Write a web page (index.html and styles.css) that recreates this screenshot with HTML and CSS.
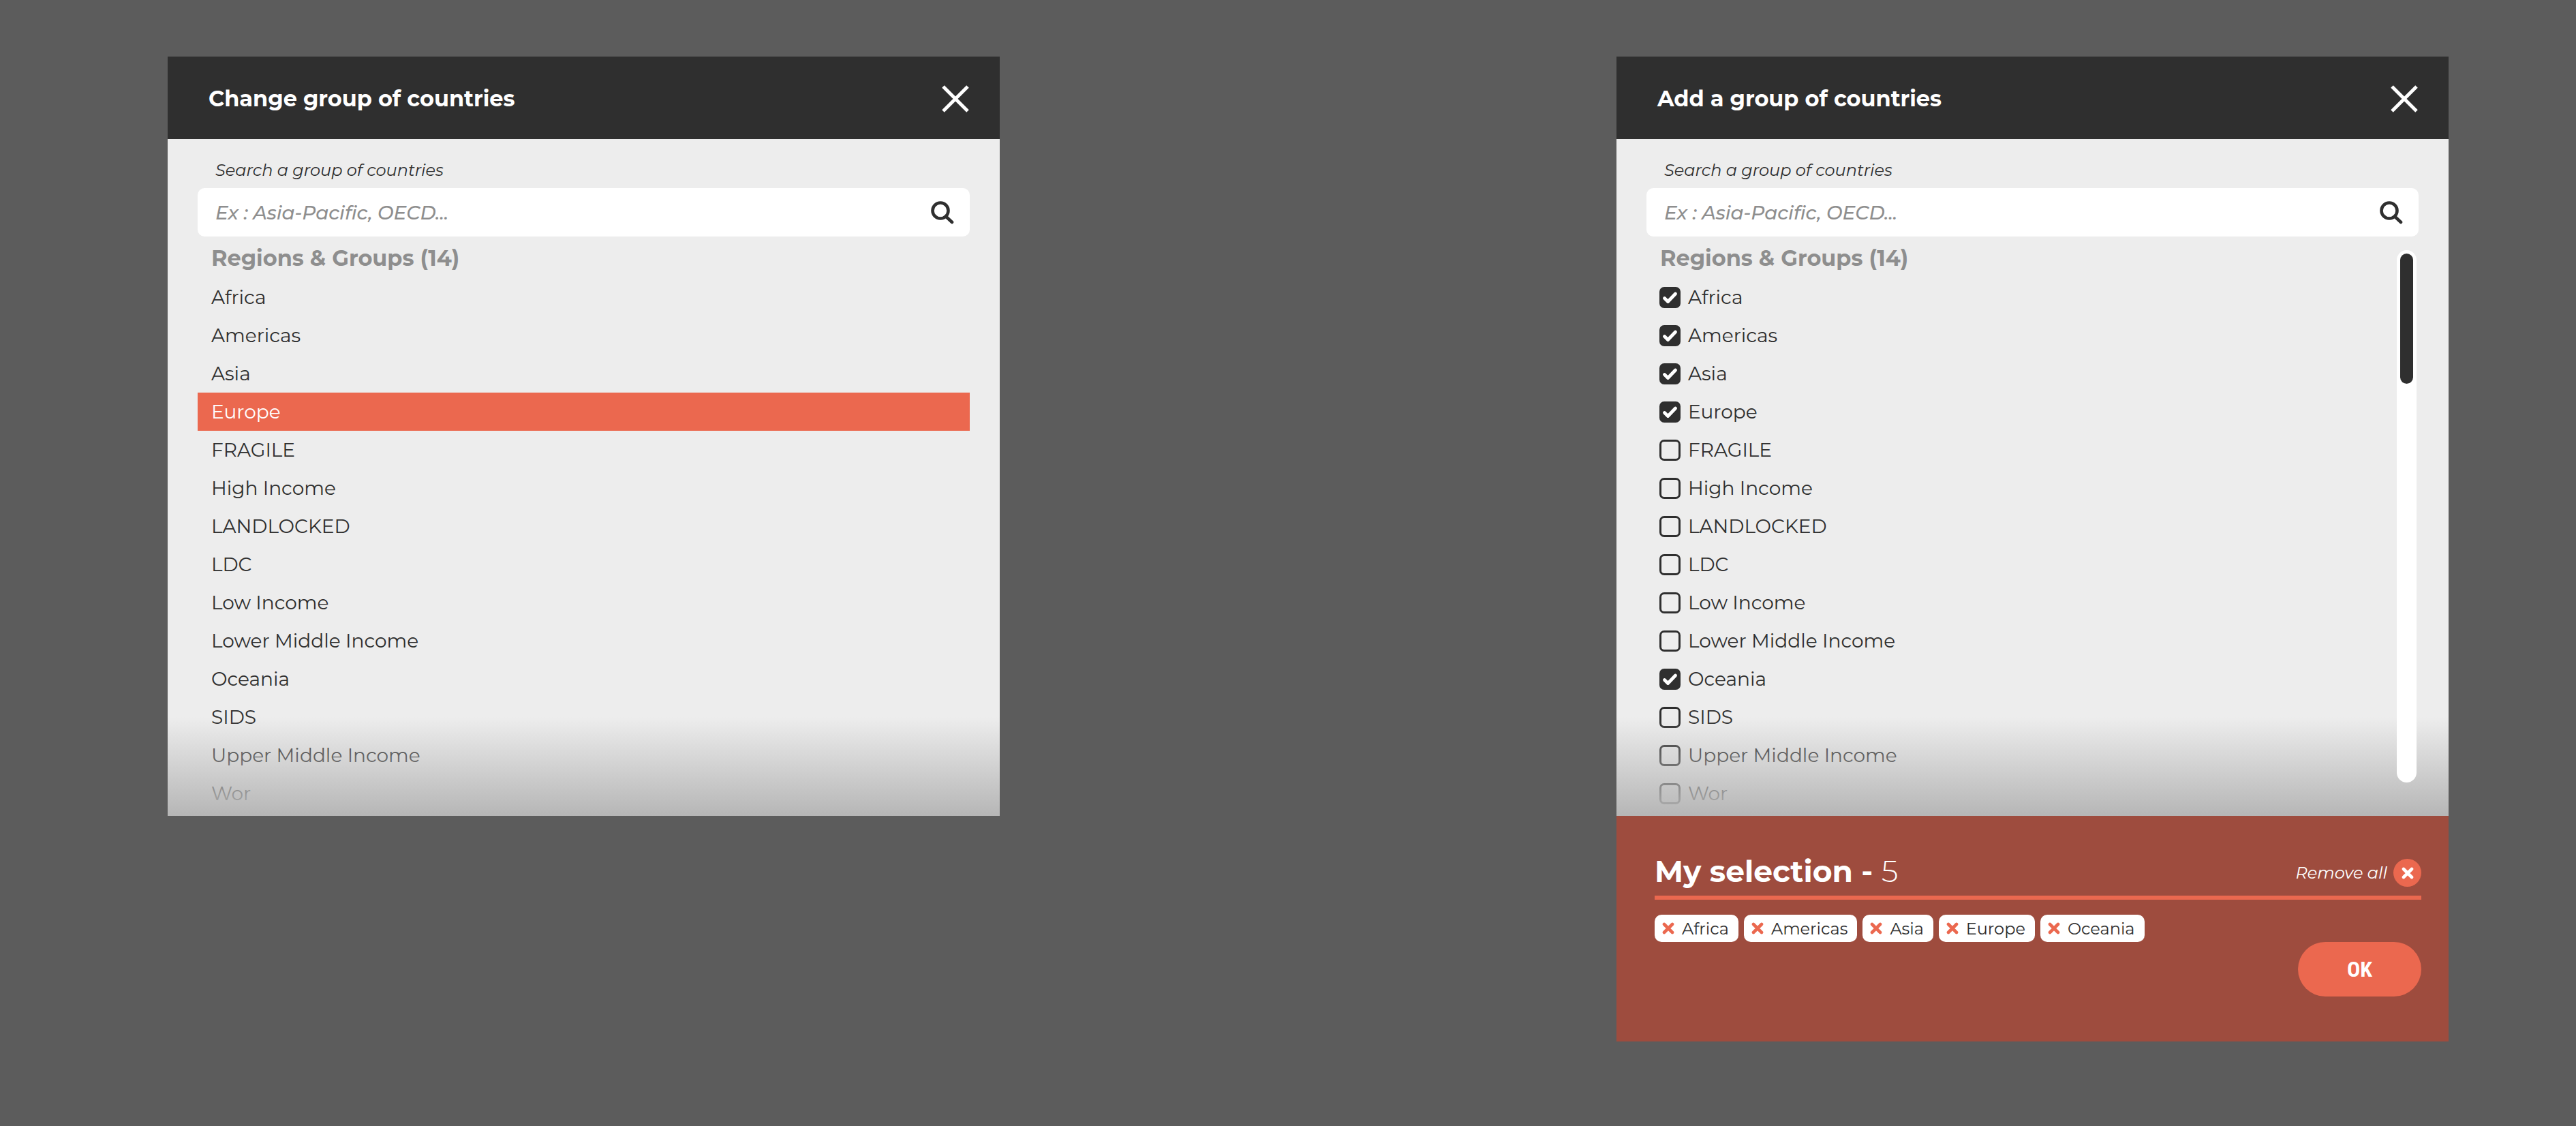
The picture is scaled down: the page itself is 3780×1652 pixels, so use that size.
FILE: index.html
```html
<!DOCTYPE html>
<html lang="en">
<head>
<meta charset="utf-8">
<title>Groups of countries</title>
<link rel="stylesheet" href="styles.css">
</head>
<body>
<svg class="sprite" aria-hidden="true">
  <symbol id="close" viewBox="0 0 40 40"><path d="M2 2 38 38M38 2 2 38" fill="none" stroke="currentColor" stroke-width="5"/></symbol>
  <symbol id="search" viewBox="0 0 34 34"><circle cx="14" cy="14" r="11.5" fill="none" stroke="currentColor" stroke-width="4.6"/><path d="M23 23.500 31 31" fill="none" stroke="currentColor" stroke-width="4.600" stroke-linecap="round"/></symbol>
  <symbol id="cross" viewBox="0 0 18 18"><path d="M3 3 15 15M15 3 3 15" fill="none" stroke="currentColor" stroke-width="4.600" stroke-linecap="round"/></symbol>
</svg>
<main class="page">
  <section class="panel" aria-labelledby="change-title">
    <header class="panel-header">
      <h1 class="panel-title" id="change-title">Change group of countries</h1>
      <button class="icon-button" type="button" aria-label="Close"><svg class="icon-close"><use href="#close"/></svg></button>
    </header>
    <div class="panel-body">
      <label class="search-label" for="search-change">Search a group of countries</label>
      <div class="search">
        <input class="search-input" id="search-change" type="text" placeholder="Ex : Asia-Pacific, OECD...">
        <button class="icon-button" type="button" aria-label="Search"><svg class="icon-search"><use href="#search"/></svg></button>
      </div>
      <div class="groups">
        <div class="groups-main">
          <h2 class="groups-title">Regions &amp; Groups (14)</h2>
          <ul class="list">
            <li><button class="row" type="button">Africa</button></li>
            <li><button class="row" type="button">Americas</button></li>
            <li><button class="row" type="button">Asia</button></li>
            <li><button class="row row-selected" type="button">Europe</button></li>
            <li><button class="row" type="button">FRAGILE</button></li>
            <li><button class="row" type="button">High Income</button></li>
            <li><button class="row" type="button">LANDLOCKED</button></li>
            <li><button class="row" type="button">LDC</button></li>
            <li><button class="row" type="button">Low Income</button></li>
            <li><button class="row" type="button">Lower Middle Income</button></li>
            <li><button class="row" type="button">Oceania</button></li>
            <li><button class="row" type="button">SIDS</button></li>
            <li><button class="row" type="button">Upper Middle Income</button></li>
            <li><button class="row" type="button">Wor</button></li>
          </ul>
        </div>
      </div>
    </div>
  </section>

  <section class="panel" aria-labelledby="add-title">
    <header class="panel-header">
      <h1 class="panel-title" id="add-title">Add a group of countries</h1>
      <button class="icon-button" type="button" aria-label="Close"><svg class="icon-close"><use href="#close"/></svg></button>
    </header>
    <div class="panel-body">
      <label class="search-label" for="search-add">Search a group of countries</label>
      <div class="search">
        <input class="search-input" id="search-add" type="text" placeholder="Ex : Asia-Pacific, OECD...">
        <button class="icon-button" type="button" aria-label="Search"><svg class="icon-search"><use href="#search"/></svg></button>
      </div>
      <div class="groups">
        <div class="groups-main">
          <h2 class="groups-title">Regions &amp; Groups (14)</h2>
          <ul class="list">
            <li><label class="row row-check"><input class="check" type="checkbox" checked>Africa</label></li>
            <li><label class="row row-check"><input class="check" type="checkbox" checked>Americas</label></li>
            <li><label class="row row-check"><input class="check" type="checkbox" checked>Asia</label></li>
            <li><label class="row row-check"><input class="check" type="checkbox" checked>Europe</label></li>
            <li><label class="row row-check"><input class="check" type="checkbox">FRAGILE</label></li>
            <li><label class="row row-check"><input class="check" type="checkbox">High Income</label></li>
            <li><label class="row row-check"><input class="check" type="checkbox">LANDLOCKED</label></li>
            <li><label class="row row-check"><input class="check" type="checkbox">LDC</label></li>
            <li><label class="row row-check"><input class="check" type="checkbox">Low Income</label></li>
            <li><label class="row row-check"><input class="check" type="checkbox">Lower Middle Income</label></li>
            <li><label class="row row-check"><input class="check" type="checkbox" checked>Oceania</label></li>
            <li><label class="row row-check"><input class="check" type="checkbox">SIDS</label></li>
            <li><label class="row row-check"><input class="check" type="checkbox">Upper Middle Income</label></li>
            <li><label class="row row-check"><input class="check" type="checkbox">Wor</label></li>
          </ul>
        </div>
        <div class="scroll-track"><div class="scroll-thumb"></div></div>
      </div>
    </div>
    <footer class="selection">
      <div class="selection-head">
        <h2 class="selection-title">My selection - <span class="selection-count">5</span></h2>
        <button class="remove-all" type="button">Remove all<span class="remove-badge"><svg class="icon-cross"><use href="#cross"/></svg></span></button>
      </div>
      <ul class="tags">
        <li><button class="tag" type="button"><svg class="icon-cross"><use href="#cross"/></svg>Africa</button></li>
        <li><button class="tag" type="button"><svg class="icon-cross"><use href="#cross"/></svg>Americas</button></li>
        <li><button class="tag" type="button"><svg class="icon-cross"><use href="#cross"/></svg>Asia</button></li>
        <li><button class="tag" type="button"><svg class="icon-cross"><use href="#cross"/></svg>Europe</button></li>
        <li><button class="tag" type="button"><svg class="icon-cross"><use href="#cross"/></svg>Oceania</button></li>
      </ul>
      <button class="ok" type="button">OK</button>
    </footer>
  </section>
</main>
</body>
</html>
```
FILE: styles.css
```css
* { box-sizing: border-box; }

body {
  margin: 0;
  background: #5c5c5c;
  color: #2f2f2f;
  font-family: Montserrat, Inter, "Liberation Sans", sans-serif;
  font-size: 28px;
  font-variant-ligatures: none;
}

h1, h2, ul { margin: 0; padding: 0; }
ul { list-style: none; }
button, input { font: inherit; color: inherit; }
button { border: 0; background: none; padding: 0; cursor: pointer; }
svg { display: block; }
.sprite { display: none; }

.page {
  display: flex;
  align-items: flex-start;
  gap: 905px;
  min-height: 100vh;
  padding: 83px 187px 83px 246px;
}

.panel { flex: 1; min-width: 0; }

.panel-header {
  display: flex;
  align-items: center;
  justify-content: space-between;
  height: 121px;
  padding: 2px 45px 0 60px;
  background: #2f2f2f;
  color: #fff;
}
.panel-title { font-size: 32px; font-weight: 700; line-height: 40px; }
.icon-close { width: 40px; height: 40px; }

.panel-body {
  position: relative;
  padding: 30px 44px 5px;
  background: #ededed;
}
/* fades the end of the list */
.panel-body::after {
  content: "";
  position: absolute;
  inset: auto 0 0;
  height: 145px;
  background: linear-gradient(rgba(182, 182, 182, 0), #b6b6b6);
  pointer-events: none;
}

.search-label {
  display: block;
  padding: 0 26px 10px;
  font-size: 24px;
  font-style: italic;
  line-height: 32px;
}
.search {
  display: flex;
  align-items: center;
  height: 71px;
  padding: 0 23px 0 26px;
  border-radius: 10px;
  background: #fff;
}
.search-input {
  flex: 1;
  min-width: 0;
  padding: 0;
  border: 0;
  outline: 0;
  background: none;
  font-style: italic;
  font-weight: 500;
}
.search-input::placeholder { color: #8e8e8e; opacity: 1; }
.icon-search { width: 34px; height: 34px; }

.groups { display: flex; }
.groups-main { flex: 1; }
.groups-title {
  padding: 2px 20px 0;
  color: #8e8e8e;
  font-size: 32px;
  font-weight: 700;
  line-height: 59px;
}

.row {
  display: flex;
  align-items: center;
  width: 100%;
  height: 56px;
  padding: 0 20px;
  text-align: left;
}
.row-check { gap: 11px; padding: 0 19px; }
.row-selected { background: #eb684f; color: #fff; }

.check {
  appearance: none;
  width: 31px;
  height: 31px;
  margin: 0;
  border: 3px solid #2f2f2f;
  border-radius: 7px;
}
.check:checked {
  background: #2f2f2f url("data:image/svg+xml,%3Csvg xmlns='http://www.w3.org/2000/svg' viewBox='0 0 31 31'%3E%3Cpath d='M7.500 16.500 12.500 21.500 23.500 10' fill='none' stroke='white' stroke-width='4.800' stroke-linecap='round' stroke-linejoin='round'/%3E%3C/svg%3E") center / 31px 31px no-repeat border-box;
}

.scroll-track {
  position: relative;
  z-index: 1;
  width: 29px;
  margin: 20px 3px 44px 0;
  padding: 5px;
  border-radius: 15px;
  background: #fff;
}
.scroll-thumb {
  height: 191px;
  border-radius: 10px;
  background: #2f2f2f;
}

.selection {
  display: flex;
  flex-direction: column;
  padding: 58px 40px 66px 56px;
  background: #9e4c3e;
  color: #fff;
}
.selection-head {
  display: flex;
  align-items: flex-end;
  justify-content: space-between;
  padding-bottom: 13px;
  border-bottom: 6px solid #eb684f;
}
.selection-title { font-size: 44px; font-weight: 700; line-height: 46px; }
.selection-count { font-weight: 300; }
.remove-all {
  display: flex;
  align-items: center;
  gap: 9px;
  font-size: 24px;
  font-style: italic;
}
.remove-badge {
  display: grid;
  place-items: center;
  width: 41px;
  height: 41px;
  border-radius: 50%;
  background: #eb684f;
}
.icon-cross { width: 18px; height: 18px; }

.tags { display: flex; flex-wrap: wrap; gap: 8px; margin-top: 22px; }
.tag {
  display: flex;
  align-items: center;
  gap: 11px;
  height: 40px;
  padding: 0 14px 0 11px;
  border-radius: 10px;
  background: #fff;
  color: #2f2f2f;
  font-size: 24px;
}
.tag .icon-cross { color: #eb684f; }

.ok {
  align-self: flex-end;
  width: 181px;
  height: 80px;
  border-radius: 40px;
  background: #eb684f;
  font-family: "Roboto Condensed", "Liberation Sans Narrow", Roboto, sans-serif;
  font-size: 32px;
  font-weight: 700;
}
```
